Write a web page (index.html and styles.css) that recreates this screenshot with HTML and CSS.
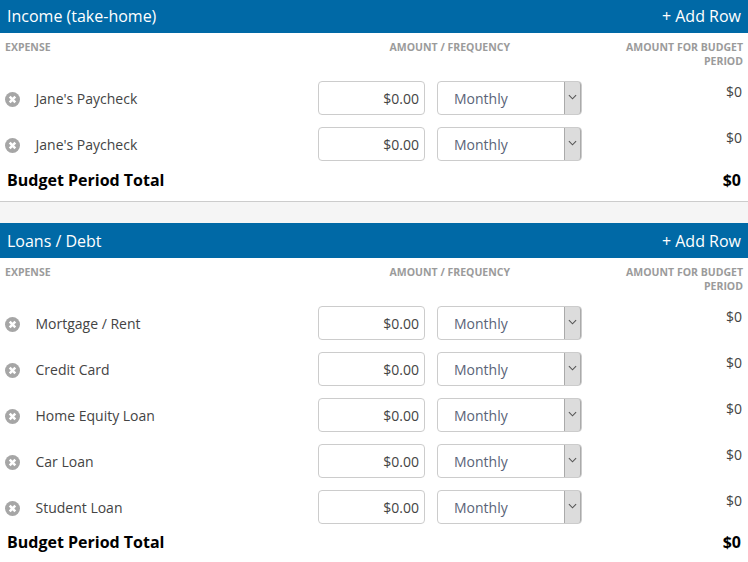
FILE: index.html
```html
<!DOCTYPE html>
<html lang="en">
<head>
    <meta charset="UTF-8">
    <title>Budget</title>
    <link rel="stylesheet" href="styles.css">
</head>
<body>
    <section class="budget-section">
        <div class="section-header">
            <span>Income (take-home)</span>
            <span>+ Add Row</span>
        </div>
        <div class="column-heads">
            <div>EXPENSE</div>
            <div class="head-amount">AMOUNT / FREQUENCY</div>
            <div class="head-period">AMOUNT FOR BUDGET PERIOD</div>
        </div>
        <div class="row">
            <svg class="remove" viewBox="0 0 14 14"><circle cx="7" cy="7" r="7"/><path d="M4.4 4.4l5.2 5.2M9.6 4.4l-5.2 5.2"/></svg>
            <div class="name">Jane's Paycheck</div>
            <input class="amount" type="text" value="$0.00">
            <div class="select"><span>Monthly</span><span class="select-btn"><svg viewBox="0 0 10 6"><path d="M1 1l4 4 4-4"/></svg></span></div>
            <div class="period">$0</div>
        </div>
        <div class="row">
            <svg class="remove" viewBox="0 0 14 14"><circle cx="7" cy="7" r="7"/><path d="M4.4 4.4l5.2 5.2M9.6 4.4l-5.2 5.2"/></svg>
            <div class="name">Jane's Paycheck</div>
            <input class="amount" type="text" value="$0.00">
            <div class="select"><span>Monthly</span><span class="select-btn"><svg viewBox="0 0 10 6"><path d="M1 1l4 4 4-4"/></svg></span></div>
            <div class="period">$0</div>
        </div>
        <div class="total">
            <span>Budget Period Total</span>
            <span>$0</span>
        </div>
    </section>
    <div class="section-gap"></div>
    <section class="budget-section">
        <div class="section-header">
            <span>Loans / Debt</span>
            <span>+ Add Row</span>
        </div>
        <div class="column-heads">
            <div>EXPENSE</div>
            <div class="head-amount">AMOUNT / FREQUENCY</div>
            <div class="head-period">AMOUNT FOR BUDGET PERIOD</div>
        </div>
        <div class="row">
            <svg class="remove" viewBox="0 0 14 14"><circle cx="7" cy="7" r="7"/><path d="M4.4 4.4l5.2 5.2M9.6 4.4l-5.2 5.2"/></svg>
            <div class="name">Mortgage / Rent</div>
            <input class="amount" type="text" value="$0.00">
            <div class="select"><span>Monthly</span><span class="select-btn"><svg viewBox="0 0 10 6"><path d="M1 1l4 4 4-4"/></svg></span></div>
            <div class="period">$0</div>
        </div>
        <div class="row">
            <svg class="remove" viewBox="0 0 14 14"><circle cx="7" cy="7" r="7"/><path d="M4.4 4.4l5.2 5.2M9.6 4.4l-5.2 5.2"/></svg>
            <div class="name">Credit Card</div>
            <input class="amount" type="text" value="$0.00">
            <div class="select"><span>Monthly</span><span class="select-btn"><svg viewBox="0 0 10 6"><path d="M1 1l4 4 4-4"/></svg></span></div>
            <div class="period">$0</div>
        </div>
        <div class="row">
            <svg class="remove" viewBox="0 0 14 14"><circle cx="7" cy="7" r="7"/><path d="M4.4 4.4l5.2 5.2M9.6 4.4l-5.2 5.2"/></svg>
            <div class="name">Home Equity Loan</div>
            <input class="amount" type="text" value="$0.00">
            <div class="select"><span>Monthly</span><span class="select-btn"><svg viewBox="0 0 10 6"><path d="M1 1l4 4 4-4"/></svg></span></div>
            <div class="period">$0</div>
        </div>
        <div class="row">
            <svg class="remove" viewBox="0 0 14 14"><circle cx="7" cy="7" r="7"/><path d="M4.4 4.4l5.2 5.2M9.6 4.4l-5.2 5.2"/></svg>
            <div class="name">Car Loan</div>
            <input class="amount" type="text" value="$0.00">
            <div class="select"><span>Monthly</span><span class="select-btn"><svg viewBox="0 0 10 6"><path d="M1 1l4 4 4-4"/></svg></span></div>
            <div class="period">$0</div>
        </div>
        <div class="row">
            <svg class="remove" viewBox="0 0 14 14"><circle cx="7" cy="7" r="7"/><path d="M4.4 4.4l5.2 5.2M9.6 4.4l-5.2 5.2"/></svg>
            <div class="name">Student Loan</div>
            <input class="amount" type="text" value="$0.00">
            <div class="select"><span>Monthly</span><span class="select-btn"><svg viewBox="0 0 10 6"><path d="M1 1l4 4 4-4"/></svg></span></div>
            <div class="period">$0</div>
        </div>
        <div class="total total-last">
            <span>Budget Period Total</span>
            <span>$0</span>
        </div>
    </section>
</body>
</html>
```

FILE: styles.css
```css
body {
    margin: -2px 0 0;
    background-color: #fff;
    font-family: "Open Sans", sans-serif;
    color: #333;
    overflow: hidden;
}

.section-header {
    display: flex;
    justify-content: space-between;
    align-items: center;
    height: 35px;
    padding: 0 7px;
    background-color: #0069a6;
    color: #fff;
    font-size: 16px;
}

.column-heads {
    display: grid;
    grid-template-columns: 300px 205px 1fr;
    height: 48px;
    padding: 7px 5px 0;
    box-sizing: border-box;
    font-size: 10.5px;
    font-weight: 700;
    line-height: 14px;
    color: #9b9b9b;
}

.head-amount {
    text-align: right;
}

.head-period {
    justify-self: end;
    width: 130px;
    text-align: right;
}

.row {
    display: grid;
    grid-template-columns: 14px 1fr 107px 145px 148px;
    column-gap: 12px;
    align-items: center;
    height: 34px;
    margin-bottom: 12px;
    padding: 0 6px 0 5px;
}

.remove {
    width: 15px;
    height: 15px;
    margin-top: 3px;
}

.remove circle {
    fill: #a6a6a6;
}

.remove path {
    fill: none;
    stroke: #fff;
    stroke-width: 2.4;
}

.row .name {
    margin-left: 4.5px;
    font-size: 14px;
    color: #444;
}

.amount {
    width: 107px;
    height: 34px;
    box-sizing: border-box;
    padding: 0 5px;
    border: 1px solid #ccc;
    border-radius: 4px;
    font-family: inherit;
    font-size: 14px;
    color: #444;
    text-align: right;
}

.select {
    display: flex;
    justify-content: space-between;
    height: 34px;
    box-sizing: border-box;
    border: 1px solid #ccc;
    border-radius: 4px;
    padding-left: 16px;
    font-size: 14px;
    line-height: 33px;
    color: #5a6478;
}

.select-btn {
    display: flex;
    align-items: center;
    justify-content: center;
    width: 17px;
    box-sizing: border-box;
    border-left: 1px solid #aaa;
    border-right: 1px solid #aaa;
    border-radius: 0 3px 3px 0;
    background-color: #dcdcdc;
}

.select-btn svg {
    width: 9px;
    height: 6px;
    margin-top: -2px;
}

.select-btn path {
    fill: none;
    stroke: #555;
    stroke-width: 1.2;
}

.period {
    align-self: start;
    margin-top: 1px;
    font-size: 14px;
    color: #444;
    text-align: right;
}

.total {
    display: flex;
    justify-content: space-between;
    margin-top: -7px;
    padding: 0 7px;
    font-size: 16px;
    font-weight: 700;
    line-height: 28px;
    color: #000;
}

.total-last {
    margin-top: -8px;
}

.section-gap {
    height: 21px;
    margin-top: 7px;
    border-top: 1px solid #ccc;
    background-color: #f5f5f5;
}
```
